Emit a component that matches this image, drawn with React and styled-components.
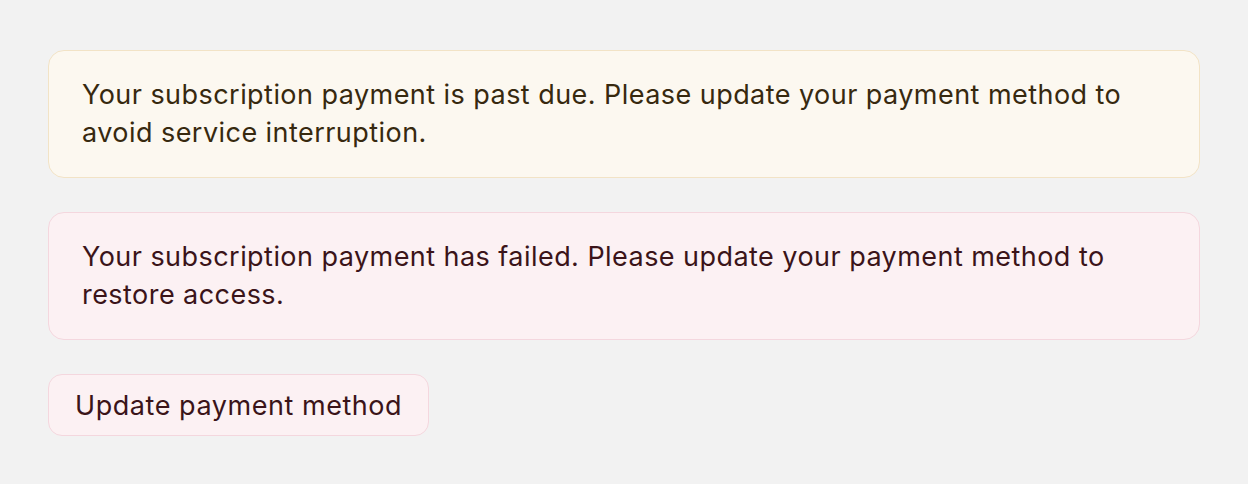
import React from 'react';
import styled, { createGlobalStyle } from 'styled-components';

const GlobalStyle = createGlobalStyle`
  html, body {
    margin: 0;
    background: #f2f2f2;
  }
  body {
    font-family: Inter, "Noto Sans", sans-serif;
  }
`;

const Page = styled.div`
  display: flex;
  flex-direction: column;
  align-items: flex-start;
  gap: 34px;
  padding: 50px 48px;
`;

const tones = {
  warning: { bg: '#fcf8f0', border: '#f2e3c6', text: '#37290f' },
  danger: { bg: '#fcf1f3', border: '#f4d7de', text: '#3b1419' },
};

const Banner = styled.div`
  box-sizing: border-box;
  width: 100%;
  height: 128px;
  padding: 25px 33px;
  border: 1.5px solid ${(p) => tones[p.$tone].border};
  border-radius: 16px;
  background: ${(p) => tones[p.$tone].bg};
  color: ${(p) => tones[p.$tone].text};
  font-size: 27px;
  letter-spacing: 0.45px;
  line-height: 37.5px;
`;

const ActionButton = styled.button`
  box-sizing: border-box;
  height: 62px;
  padding: 0 26px;
  border: 1.5px solid #f4d7de;
  border-radius: 14px;
  background: #fcf1f3;
  color: #3b1419;
  font-family: inherit;
  font-size: 27px;
  letter-spacing: 0.55px;
  cursor: pointer;
`;

function App() {
  return (
    <>
      <GlobalStyle />
      <Page>
        <Banner $tone="warning">
          Your subscription payment is past due. Please update your payment method to avoid service interruption.
        </Banner>
        <Banner $tone="danger">
          Your subscription payment has failed. Please update your payment method to restore access.
        </Banner>
        <ActionButton>Update payment method</ActionButton>
      </Page>
    </>
  );
}

export default App;
